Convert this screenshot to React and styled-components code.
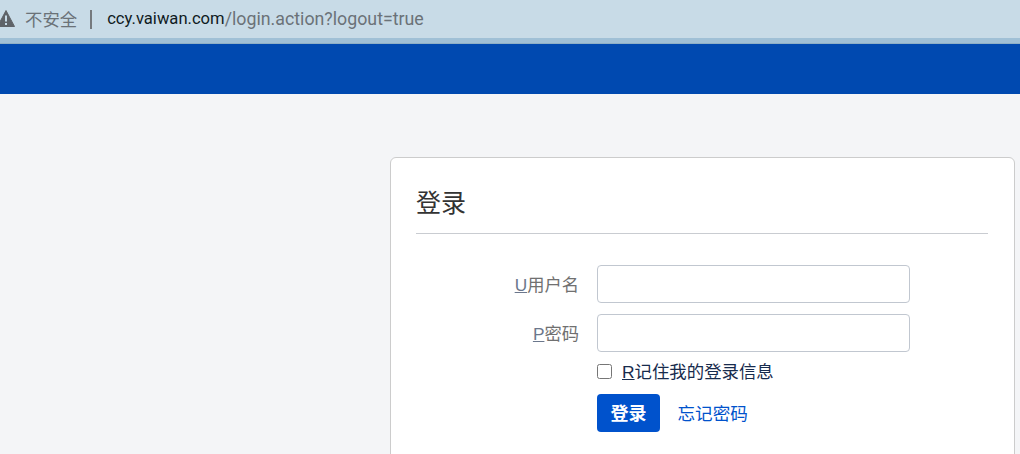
import React from "react";
import styled, { createGlobalStyle } from "styled-components";

const GlobalStyle = createGlobalStyle`
  html, body {
    margin: 0;
    padding: 0;
    background: #f4f5f7;
    overflow: hidden;
  }
  body {
    font-family: "Liberation Sans", "Noto Sans CJK SC", sans-serif;
  }
`;

const Page = styled.div`
  width: 1020px;
  height: 454px;
  overflow: hidden;
  display: flex;
  flex-direction: column;
`;

const AddressBar = styled.div`
  height: 38px;
  flex: none;
  display: flex;
  align-items: center;
  background: #c8dbe7;
  font-family: "Roboto", "Noto Sans CJK SC", sans-serif;
  font-size: 17.8px;
  color: #6b7278;
`;

const WarnIcon = styled.svg`
  width: 18px;
  height: 18px;
  margin-left: -3px;
  flex: none;
`;

const Insecure = styled.span`
  margin-left: 10px;
  padding-bottom: 2px;
  font-size: 17.4px;
`;

const Divider = styled.span`
  width: 2px;
  height: 19px;
  margin: 0 15px 0 13px;
  background: #75797d;
`;

const Host = styled.span`
  color: #0f1a22;
  font-size: 16.6px;
  padding-bottom: 1px;
`;

const Path = styled.span`
  padding-bottom: 1px;
`;

const BarEdge = styled.div`
  height: 6px;
  flex: none;
  background: #a0c0d6;
  border-bottom: 1px solid #8fb0c6;
  box-sizing: border-box;
`;

const Header = styled.header`
  height: 50px;
  flex: none;
  background: #0049b0;
`;

const Content = styled.main`
  flex: 1;
  padding: 63px 5px 0 390px;
  min-height: 0;
`;

const Card = styled.section`
  box-sizing: border-box;
  height: 320px;
  padding: 27px 26px 0 25px;
  background: #fff;
  border: 1px solid #cccccc;
  border-radius: 6px;
`;

const Title = styled.h1`
  margin: 0;
  height: 48px;
  border-bottom: 1px solid #c9ccd1;
  font-size: 25px;
  line-height: 36px;
  font-weight: 400;
  color: #333;
`;

const Form = styled.form`
  margin-top: 31px;
  display: flex;
  flex-direction: column;
`;

const Row = styled.div`
  display: flex;
  align-items: center;
  margin-bottom: ${(p) => p.$gap || 0}px;
`;

const Label = styled.label`
  width: 163px;
  flex: none;
  margin-right: 18px;
  padding-bottom: 2px;
  text-align: right;
  font-size: 17.3px;
  color: #707070;

  u {
    color: #6b778c;
  }
`;

const Input = styled.input`
  box-sizing: border-box;
  width: 313px;
  height: 38px;
  padding: 0 8px;
  background: #fff;
  border: 1px solid #c1c7d0;
  border-radius: 4px;
`;

const Actions = styled.div`
  margin-left: 181px;
  display: flex;
  flex-direction: column;
`;

const Remember = styled.label`
  display: flex;
  align-items: center;
  height: 24px;
  margin-top: 7px;
  font-size: 17.4px;
  color: #172b4d;
`;

const Check = styled.input`
  width: 15px;
  height: 15px;
  margin: 0 10px 0 0;
`;

const RememberText = styled.span`
  padding-bottom: 2px;
`;

const ButtonRow = styled.div`
  display: flex;
  align-items: center;
  margin-top: 11px;
`;

const Submit = styled.button`
  box-sizing: border-box;
  width: 63px;
  height: 38px;
  padding: 0 0 2px;
  border: none;
  border-radius: 4px;
  background: #0052cc;
  color: #fff;
  font-family: inherit;
  font-size: 18px;
  font-weight: 700;
`;

const Forgot = styled.a`
  margin-left: 17.5px;
  padding-bottom: 2px;
  font-size: 17.6px;
  color: #0052cc;
  text-decoration: none;
`;

export default function App() {
  return (
    <>
      <GlobalStyle />
      <Page>
        <AddressBar>
          <WarnIcon viewBox="0 0 18 18">
            <path d="M9 0.5 L17.5 16.5 L0.5 16.5 Z" fill="#5f6368" stroke="#5f6368" strokeLinejoin="round" />
            <rect x="8" y="5.5" width="2" height="6" fill="#c8dbe7" />
            <rect x="8" y="13" width="2" height="2" fill="#c8dbe7" />
          </WarnIcon>
          <Insecure>不安全</Insecure>
          <Divider />
          <Host>ccy.vaiwan.com</Host>
          <Path>/login.action?logout=true</Path>
        </AddressBar>
        <BarEdge />
        <Header />
        <Content>
          <Card>
            <Title>登录</Title>
            <Form onSubmit={(e) => e.preventDefault()}>
              <Row $gap={11}>
                <Label htmlFor="username"><u>U</u>用户名</Label>
                <Input id="username" type="text" />
              </Row>
              <Row>
                <Label htmlFor="password"><u>P</u>密码</Label>
                <Input id="password" type="password" />
              </Row>
              <Actions>
                <Remember>
                  <Check type="checkbox" />
                  <RememberText><u>R</u>记住我的登录信息</RememberText>
                </Remember>
                <ButtonRow>
                  <Submit type="submit">登录</Submit>
                  <Forgot href="#">忘记密码</Forgot>
                </ButtonRow>
              </Actions>
            </Form>
          </Card>
        </Content>
      </Page>
    </>
  );
}
